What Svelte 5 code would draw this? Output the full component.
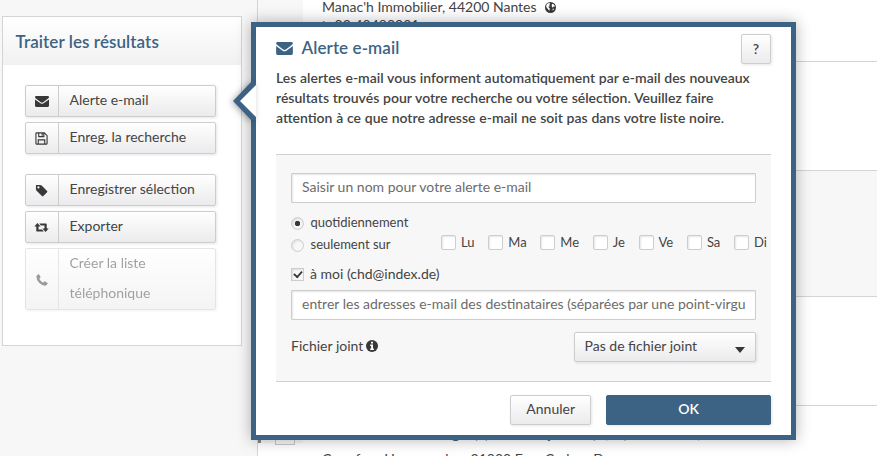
<script>
	const groups = [
		[
			{ icon: 'mail', label: 'Alerte e-mail' },
			{ icon: 'save', label: 'Enreg. la recherche' }
		],
		[
			{ icon: 'tag', label: 'Enregistrer sélection' },
			{ icon: 'export', label: 'Exporter' },
			{ icon: 'phone', label: 'Créer la liste téléphonique', disabled: true }
		]
	];

	let days = $state([
		{ name: 'Lu', checked: false },
		{ name: 'Ma', checked: false },
		{ name: 'Me', checked: false },
		{ name: 'Je', checked: false },
		{ name: 'Ve', checked: false },
		{ name: 'Sa', checked: false },
		{ name: 'Di', checked: false }
	]);

	let open = $state(true);
	let frequency = $state('daily');
	let toMe = $state(true);
	let name = $state('');
	let recipients = $state('');
</script>

{#snippet icon(type)}
	{#if type === 'mail'}
		<svg class="icon" viewBox="0 0 18 14">
			<path d="M1.500 0h15Q18 0 18 1.300Q18 2.500 16.500 3.600L10.500 8Q9 9 7.500 8L1.500 3.600Q0 2.500 0 1.300Q0 0 1.500 0ZM0 4.300L7 9.300Q9 10.600 11 9.300L18 4.300V12.500Q18 14 16.500 14H1.500Q0 14 0 12.500Z" />
		</svg>
	{:else if type === 'save'}
		<svg class="icon save" viewBox="0 0 14 14">
			<path d="M1.500 1h8.500l3 3v8.500q0 .5-.5.5h-11q-.5 0-.5-.5v-11q0-.5.5-.5zM4 1v4h5.500V1M3.500 13V8.500h7V13M7.700 1v3" />
		</svg>
	{:else if type === 'tag'}
		<svg class="icon tag" viewBox="0 0 14 14">
			<path fill-rule="evenodd" d="M1.500 1H5.500Q6.500 1 7.200 1.700L13 7.500Q13.700 8.200 13 9L9 13Q8.200 13.700 7.500 13L1.700 7.200Q1 6.500 1 5.500V1.500Q1 1 1.500 1ZM3.700 2.500a1.200 1.200 0 1 0 0 2.400a1.200 1.200 0 1 0 0-2.400Z" />
		</svg>
	{:else if type === 'export'}
		<svg class="icon export" viewBox="0 0 16 10">
			<path d="M3.500 0L0 4H2.200V8.500Q2.200 9.500 3.200 9.500H10.500L8.700 7.300H4.700V4H7ZM12.500 10L16 6H13.800V1.500Q13.800.5 12.800.5H5.500L7.300 2.700H11.300V6H9Z" />
		</svg>
	{:else if type === 'phone'}
		<svg class="icon phone" viewBox="0 0 12 12">
			<path d="M.4 2.500Q.4 1 2.600.3Q3 .2 3.300.7L4.500 3Q4.700 3.400 4.300 3.800L3.200 4.800Q4.300 7.300 7.100 8.700L8.200 7.600Q8.600 7.200 9 7.400L11.300 8.700Q11.800 9 11.600 9.500Q11 11.600 9.200 11.700Q6 11.700 3.100 8.800Q.4 5.800.4 2.500Z" />
		</svg>
	{/if}
{/snippet}

<div class="page">
	<aside class="sidebar">
		<section class="panel">
			<h2>Traiter les résultats</h2>
			<div class="panel-body">
				{#each groups as group}
					<div class="group">
						{#each group as item}
							<button class="action" disabled={item.disabled} onclick={() => { if (item.icon === 'mail') open = true; }}>
								<span class="action-icon">{@render icon(item.icon)}</span>
								<span class="action-label">{item.label}</span>
							</button>
						{/each}
					</div>
				{/each}
			</div>
		</section>
	</aside>

	<main class="results">
		<article class="first">
			<div class="select"></div>
			<div class="result">
				<p>
					Manac'h Immobilier, 44200 Nantes
					<svg class="globe" viewBox="0 0 12 12">
						<circle cx="6" cy="6" r="6" />
						<path d="M2 2.300L4.500 1L5.800 2L4.500 3.300L5.300 4.500L3.500 5.300L5.300 7.300L4.700 9.500L2.800 7.300L1.200 5.200ZM7.600 2L9.800 2.600L11 5L9.500 4.800L8.500 6.200L7.300 4.500ZM8.100 7.500L10 7.200L8.600 9.500Z" />
					</svg>
				</p>
				<p class="tel"><svg viewBox="0 0 12 12"><path d="M1 1L3 0L4 3L3 4Q5 7 8 8L9 7L12 9L11 11Q4 13 1 3Z" /></svg> 02 40480001</p>
			</div>
		</article>
		<article class="white"></article>
		<article class="grey"></article>
		<article class="white"></article>
		<article class="last">
			<div class="select"><span class="box"></span></div>
			<div class="result">
				<h3>Maison dans village (s) dont 5 pièce (4, 5) à vendre, 100 m²</h3>
				<p>Carrefour Homemarker, 31000 Fors Carbon D</p>
			</div>
		</article>
	</main>

	{#if open}
		<div class="dialog">
			<svg class="arrow" viewBox="0 0 23 40">
				<polygon points="0,20 18,1 23,1 23,39 18,39" fill="#3d6384" />
				<polygon points="7,20 23,4 23,36" fill="#fff" />
			</svg>
			<header>
				<h1>{@render icon('mail')}Alerte e-mail</h1>
				<button class="btn help">?</button>
			</header>
			<p class="intro">
				Les alertes e-mail vous informent automatiquement par e-mail des nouveaux résultats trouvés pour votre recherche ou votre sélection. Veuillez faire attention à ce que notre adresse e-mail ne soit pas dans votre liste noire.
			</p>
			<div class="form">
				<input class="text" type="text" placeholder="Saisir un nom pour votre alerte e-mail" bind:value={name} />
				<div class="frequency">
					<div class="radios">
						<label><input type="radio" value="daily" bind:group={frequency} />quotidiennement</label>
						<label><input type="radio" value="days" bind:group={frequency} />seulement sur</label>
					</div>
					<div class="days">
						{#each days as day}
							<label><input type="checkbox" bind:checked={day.checked} />{day.name}</label>
						{/each}
					</div>
				</div>
				<label class="me">
					<input type="checkbox" bind:checked={toMe} />à moi (chd@index.de)
				</label>
				<input class="text" type="text" placeholder="entrer les adresses e-mail des destinataires (séparées par une point-virgule)" bind:value={recipients} />
				<div class="attachment">
					<span>Fichier joint
						<svg class="info" viewBox="0 0 12 12">
							<circle cx="6" cy="6" r="6" />
							<path d="M5 1.800h2v1.700H5zM4.200 4.600H7v3.800h.9V10H4.200V8.400h.9V6h-.9z" />
						</svg>
					</span>
					<button class="btn select-file">Pas de fichier joint<i></i></button>
				</div>
			</div>
			<footer>
				<button class="btn" onclick={() => (open = false)}>Annuler</button>
				<button class="btn ok" onclick={() => (open = false)}>OK</button>
			</footer>
		</div>
	{/if}
</div>

<style>
	:global(body) {
		margin: 0;
		overflow: hidden;
	}

	.page {
		position: relative;
		display: flex;
		width: 877px;
		height: 456px;
		overflow: hidden;
		background: #f7f7f7;
		color: #444;
		font: 14px/20px Lato, "Liberation Sans", sans-serif;
	}

	.page * {
		box-sizing: border-box;
	}

	h1, h2, h3, p {
		margin: 0;
	}

	button, input {
		font: inherit;
		color: inherit;
		margin: 0;
	}

	.icon {
		display: block;
		width: 14px;
		height: 11px;
		fill: currentColor;
	}

	.save {
		width: 13px;
		height: 13px;
		fill: none;
		stroke: currentColor;
		stroke-width: 1.2;
	}

	.tag {
		width: 13px;
		height: 13px;
	}

	.export {
		width: 15px;
		height: 9px;
	}

	.phone {
		width: 12px;
		height: 12px;
	}

	/* sidebar */
	.sidebar {
		width: 257px;
		flex: none;
		padding: 16px 15px 0 2px;
	}

	.panel {
		height: 330px;
		border: 1px solid #d4d4d4;
		background: #fff;
	}

	.panel h2 {
		height: 48px;
		padding-left: 12.5px;
		background: linear-gradient(#fff, #f1f1f1);
		color: #3d6384;
		font-size: 17px;
		font-weight: 600;
		letter-spacing: 0.08px;
		line-height: 50px;
	}

	.panel-body {
		padding: 20px 25px 0 22px;
	}

	.group {
		display: flex;
		flex-direction: column;
		gap: 5px;
		margin-bottom: 20px;
	}

	.action {
		display: flex;
		width: 191px;
		min-height: 32px;
		padding: 0;
		border: 1px solid #cdcdcd;
		border-radius: 2px;
		background: linear-gradient(#fff, #ebebed);
		box-shadow: 1px 1px 3px rgba(0, 0, 0, 0.1);
		line-height: 30px;
		text-align: left;
	}

	.action:disabled {
		opacity: 0.5;
	}

	.action-icon {
		display: flex;
		align-items: center;
		justify-content: center;
		align-self: stretch;
		width: 33px;
		flex: none;
		padding: 1px 1px 0 0;
		border-right: 1px solid #cdcdcd;
		color: #383838;
	}

	.action-label {
		margin: -1px 0 1px;
		padding: 0 16px 0 10.5px;
	}

	/* results */
	.results {
		flex: 1;
		border-left: 1px solid #d4d4d4;
		background: #fff;
	}

	article {
		display: flex;
		border-bottom: 1px solid #d4d4d4;
	}

	.first {
		height: 62px;
	}

	.white {
		height: 109px;
	}

	.grey {
		height: 126px;
		background: #f7f7f7;
	}

	.last {
		height: 109px;
	}

	.select {
		width: 45px;
		flex: none;
		background: #f7f7f7;
	}

	.box {
		display: block;
		width: 20px;
		height: 20px;
		margin: 19px 0 0 17px;
		border: 1px solid #c9c9c9;
		background: #f9f9f9;
	}

	.last .select {
		height: 37px;
		border-left: 3px solid #888;
		padding-right: 3px;
	}

	.last .box {
		margin-left: 14px;
	}

	.result {
		padding-left: 19px;
		white-space: nowrap;
	}

	.first .result {
		margin-top: -3px;
	}

	.globe, .info {
		width: 12px;
		height: 12px;
		vertical-align: -1px;
	}

	.globe {
		width: 11px;
		height: 11px;
		margin-left: 5px;
	}

	.globe circle, .info circle {
		fill: #383838;
	}

	.globe path, .info path {
		fill: #fff;
	}

	.tel {
		line-height: 16px;
	}

	.tel svg {
		width: 9px;
		height: 9px;
		fill: #444;
	}

	h3 {
		margin-top: 16px;
		color: #3d6384;
		font-size: 17px;
		line-height: 20px;
	}

	.last p {
		margin-top: 7px;
	}

	/* dialog */
	.dialog {
		position: absolute;
		left: 251px;
		top: 22px;
		width: 545px;
		height: 418px;
		padding: 0 20px;
		border: 5px solid #3d6384;
		background: #fff;
		box-shadow: 0 0 14px rgba(0, 0, 0, 0.3);
	}

	.arrow {
		position: absolute;
		left: -23px;
		top: 54px;
		width: 23px;
		height: 40px;
		filter: drop-shadow(-2px 1px 3px rgba(0, 0, 0, 0.3));
	}

	header {
		display: flex;
		justify-content: space-between;
		padding-top: 7px;
	}

	h1 {
		display: flex;
		align-items: center;
		gap: 8.5px;
		height: 28px;
		color: #3d6384;
		font-size: 17px;
		font-weight: 600;
		letter-spacing: 0.08px;
	}

	h1 .icon {
		width: 17px;
		height: 13px;
	}

	.btn {
		height: 30px;
		padding: 0 15px 3px;
		border: 1px solid #cdcdcd;
		border-radius: 2px;
		background: linear-gradient(#fff, #ebebed);
		box-shadow: 1px 1px 3px rgba(0, 0, 0, 0.1);
		line-height: 24px;
	}

	.help {
		width: 30px;
		padding: 0;
		font-weight: 600;
	}

	.intro {
		margin-top: 4px;
		font-weight: 600;
		word-spacing: 0.25px;
	}

	.form {
		height: 228px;
		margin-top: 26px;
		padding: 18px 15px 0;
		border-top: 1px solid #d0d0d0;
		border-bottom: 1px solid #d0d0d0;
		background: #f7f7f7;
	}

	.text {
		display: block;
		width: 465px;
		height: 30px;
		padding: 0 9px 3px 10px;
		border: 1px solid #cdcdcd;
		border-radius: 1px;
		background: #fff;
		box-shadow: inset 1px 1px 2px rgba(0, 0, 0, 0.1);
		outline: none;
	}

	.text::placeholder {
		color: #6c6c6c;
		opacity: 1;
	}

	.frequency {
		display: flex;
		height: 58px;
		padding-top: 8px;
		font-size: 13px;
	}

	.radios {
		width: 150px;
		flex: none;
	}

	label {
		display: flex;
		align-items: center;
		white-space: nowrap;
	}

	.radios label {
		height: 22px;
	}

	input[type="radio"], input[type="checkbox"] {
		appearance: none;
		width: 13px;
		height: 13px;
		flex: none;
		margin: 2px 6.5px 0 0;
		border: 1px solid #cdcdcd;
		background: #f7f7f7;
		box-shadow: inset 1px 1px 2px rgba(0, 0, 0, 0.1);
	}

	input[type="radio"] {
		border-radius: 50%;
	}

	input[type="radio"]:checked {
		background: radial-gradient(circle, #383838 2.4px, #f3f3f3 3px);
	}

	.days {
		display: flex;
		gap: 13.7px;
		height: 20px;
		margin-top: 21px;
	}

	.days input[type="checkbox"] {
		width: 15px;
		height: 15px;
		margin: 0 5px 0 0;
		border-radius: 2px;
		background: #fff;
	}

	.me {
		height: 29px;
		padding-bottom: 4px;
	}

	.me input[type="checkbox"] {
		display: grid;
		place-items: center;
		margin-right: 6px;
	}

	.me input:checked::before {
		content: "";
		width: 4px;
		height: 7px;
		margin-top: -2px;
		border: solid #383838;
		border-width: 0 2px 2px 0;
		transform: rotate(42deg) scale(0.9);
	}

	.attachment {
		display: flex;
		justify-content: space-between;
		padding-top: 12px;
	}

	.attachment span {
		padding-top: 4px;
	}

	.info {
		margin-left: -0.5px;
	}

	.select-file {
		display: flex;
		justify-content: space-between;
		width: 182px;
		padding: 0 10px 0 9.5px;
		line-height: 26px;
	}

	.select-file i {
		margin-top: 14px;
		border: 5px solid transparent;
		border-top: 6px solid #383838;
		border-bottom: 0;
		height: 0;
	}

	footer {
		display: flex;
		justify-content: flex-end;
		gap: 15px;
		padding-top: 13px;
	}

	.ok {
		width: 165px;
		border-color: #3d6384;
		background: #3d6384;
		color: #fff;
		font-weight: 600;
	}
</style>
